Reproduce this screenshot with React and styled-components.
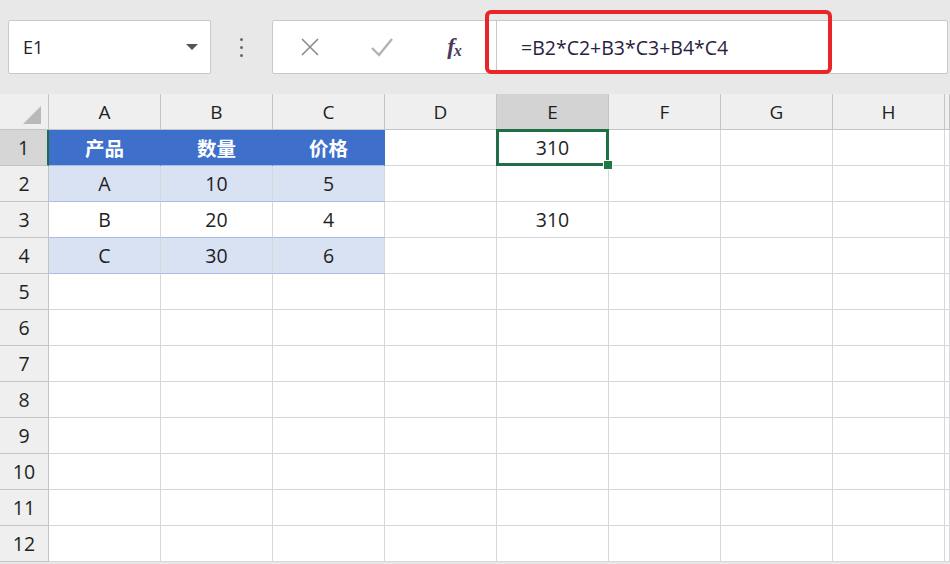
import React from 'react';
import styled, { createGlobalStyle } from 'styled-components';

const GlobalStyle = createGlobalStyle`
  html, body {
    margin: 0;
    padding: 0;
    background: #e8e8e8;
  }
  body {
    font-family: "Open Sans", "Noto Sans", "Noto Sans CJK SC", sans-serif;
    color: #1f1f1f;
  }
`;

const Page = styled.div`
  width: 950px;
  height: 564px;
  overflow: hidden;
  background: #e8e8e8;
`;

const TopBar = styled.div`
  position: relative;
  height: 94px;
  display: flex;
  align-items: flex-start;
  padding: 20px 2px 0 8px;
  box-sizing: border-box;
`;

const NameBox = styled.div`
  width: 203px;
  height: 54px;
  box-sizing: border-box;
  background: #fff;
  border: 1px solid #c8c8c8;
  border-radius: 2px;
  display: flex;
  align-items: center;
  justify-content: space-between;
  padding: 0 12px 0 14px;
  font-size: 18px;
  color: #222;
`;

const Caret = styled.span`
  width: 0;
  height: 0;
  border-left: 6px solid transparent;
  border-right: 6px solid transparent;
  border-top: 6px solid #555;
`;

const Dots = styled.div`
  width: 61px;
  height: 54px;
  display: flex;
  flex-direction: column;
  align-items: center;
  justify-content: center;
  gap: 5px;
  span {
    width: 3px;
    height: 3px;
    border-radius: 50%;
    background: #666;
  }
`;

const FormulaBox = styled.div`
  flex: 1;
  height: 54px;
  box-sizing: border-box;
  background: #fff;
  border: 1px solid #c8c8c8;
  border-radius: 2px;
  display: flex;
`;

const IconArea = styled.div`
  width: 224px;
  display: flex;
  align-items: center;
  padding-left: 18px;
  gap: 34px;
  border-right: 1px solid #c8c8c8;
  box-sizing: border-box;
`;

const IconSlot = styled.div`
  width: 38px;
  display: flex;
  justify-content: center;
  align-items: center;
`;

const Fx = styled.span`
  font-family: "Liberation Serif", "DejaVu Serif", serif;
  font-style: italic;
  font-weight: bold;
  font-size: 23px;
  color: #4a3b5c;
  letter-spacing: -1px;
  sub {
    font-size: 16px;
    vertical-align: -2px;
  }
`;

const FormulaText = styled.div`
  display: flex;
  align-items: center;
  padding-left: 24px;
  font-size: 19.5px;
  color: #2a2140;
`;

const RedMark = styled.div`
  position: absolute;
  left: 485px;
  top: 10px;
  width: 347px;
  height: 64px;
  box-sizing: border-box;
  border: 4px solid #e8262a;
  border-radius: 6px;
  pointer-events: none;
`;

const Grid = styled.div`
  display: grid;
  grid-template-columns: 49px repeat(8, 112px) 1fr;
  grid-template-rows: 36px repeat(12, 36px);
  background: #fff;
`;

const Corner = styled.div`
  background: #efefef;
  border-right: 1px solid #c4c4c4;
  border-bottom: 1px solid #c4c4c4;
  box-sizing: border-box;
  display: flex;
  align-items: flex-end;
  justify-content: flex-end;
  padding: 0 7px 5px 0;
`;

const ColHead = styled.div`
  background: ${p => (p.$active ? '#d3d3d3' : '#efefef')};
  border-right: 1px solid #c4c4c4;
  border-bottom: 1px solid ${p => (p.$active ? '#a8a8a8' : '#c4c4c4')};
  box-sizing: border-box;
  display: flex;
  align-items: center;
  justify-content: center;
  font-size: 19px;
  color: #1f1f1f;
`;

const RowHead = styled.div`
  background: ${p => (p.$active ? '#d6d6d6' : '#efefef')};
  border-right: ${p => (p.$active ? '2px solid #1e6f45' : '1px solid #c4c4c4')};
  border-bottom: 1px solid #c4c4c4;
  box-sizing: border-box;
  display: flex;
  align-items: center;
  justify-content: center;
  font-size: 19.5px;
  color: #1f1f1f;
`;

const toneBg = {
  head: '#3d6fcb',
  band: '#d9e2f3',
  plain: '#ffffff',
};

const Cell = styled.div`
  position: relative;
  z-index: ${p => (p.$selected ? 2 : 'auto')};
  background: ${p => toneBg[p.$tone] || '#fff'};
  border-right: 1px solid ${p => (p.$tone === 'head' ? '#3d6fcb' : '#d6d6dc')};
  border-bottom: 1px solid ${p => (p.$tone ? '#a9bde3' : '#d6d6dc')};
  box-sizing: border-box;
  display: flex;
  align-items: center;
  justify-content: center;
  font-size: 19.5px;
  color: ${p => (p.$tone === 'head' ? '#fff' : '#1f1f1f')};
  font-weight: ${p => (p.$tone === 'head' ? 700 : 400)};
  font-family: ${p =>
    p.$tone === 'head'
      ? '"Noto Sans CJK SC", "Noto Sans", sans-serif'
      : '"Open Sans", "Noto Sans", sans-serif'};
`;

const Selection = styled.div`
  position: absolute;
  left: -1px;
  top: -1px;
  right: -1px;
  bottom: -1px;
  border: 3px solid #1e6f45;
  pointer-events: none;
  &::after {
    content: '';
    position: absolute;
    right: -7px;
    bottom: -7px;
    width: 8px;
    height: 8px;
    background: #1e7a45;
    border: 1px solid #fff;
  }
`;

const cols = ['A', 'B', 'C', 'D', 'E', 'F', 'G', 'H', ''];

const table = [
  { tone: 'head', vals: ['产品', '数量', '价格'] },
  { tone: 'band', vals: ['A', '10', '5'] },
  { tone: 'plain', vals: ['B', '20', '4'] },
  { tone: 'band', vals: ['C', '30', '6'] },
];

const extra = { '1-4': '310', '3-4': '310' };

export default function App() {
  const rows = Array.from({ length: 12 }, (_, i) => i + 1);
  return (
    <Page>
      <GlobalStyle />
      <TopBar>
        <NameBox>
          <span>E1</span>
          <Caret />
        </NameBox>
        <Dots>
          <span />
          <span />
          <span />
        </Dots>
        <FormulaBox>
          <IconArea>
            <IconSlot>
              <svg width="22" height="22" viewBox="0 0 22 22">
                <path d="M3 3 L19 19 M19 3 L3 19" stroke="#8a8a8a" strokeWidth="1.6" fill="none" />
              </svg>
            </IconSlot>
            <IconSlot>
              <svg width="26" height="22" viewBox="0 0 26 22">
                <path d="M3 12 L10 19 L23 3" stroke="#b3b3b3" strokeWidth="2.4" fill="none" />
              </svg>
            </IconSlot>
            <IconSlot>
              <Fx>
                f<sub>x</sub>
              </Fx>
            </IconSlot>
          </IconArea>
          <FormulaText>=B2*C2+B3*C3+B4*C4</FormulaText>
        </FormulaBox>
        <RedMark />
      </TopBar>
      <Grid>
        <Corner>
          <svg width="18" height="18" viewBox="0 0 18 18">
            <path d="M18 0 L18 18 L0 18 Z" fill="#b9b9b9" />
          </svg>
        </Corner>
        {cols.map((c, i) => (
          <ColHead key={'h' + i} $active={c === 'E'}>
            {c}
          </ColHead>
        ))}
        {rows.map(r => (
          <React.Fragment key={r}>
            <RowHead $active={r === 1}>{r}</RowHead>
            {cols.map((c, ci) => {
              const t = table[r - 1];
              const inTable = t && ci < 3;
              const val = inTable ? t.vals[ci] : extra[`${r}-${ci}`];
              const selected = r === 1 && ci === 4;
              return (
                <Cell key={c + ci} $tone={inTable ? t.tone : undefined} $selected={selected}>
                  {val}
                  {selected && <Selection />}
                </Cell>
              );
            })}
          </React.Fragment>
        ))}
      </Grid>
    </Page>
  );
}
